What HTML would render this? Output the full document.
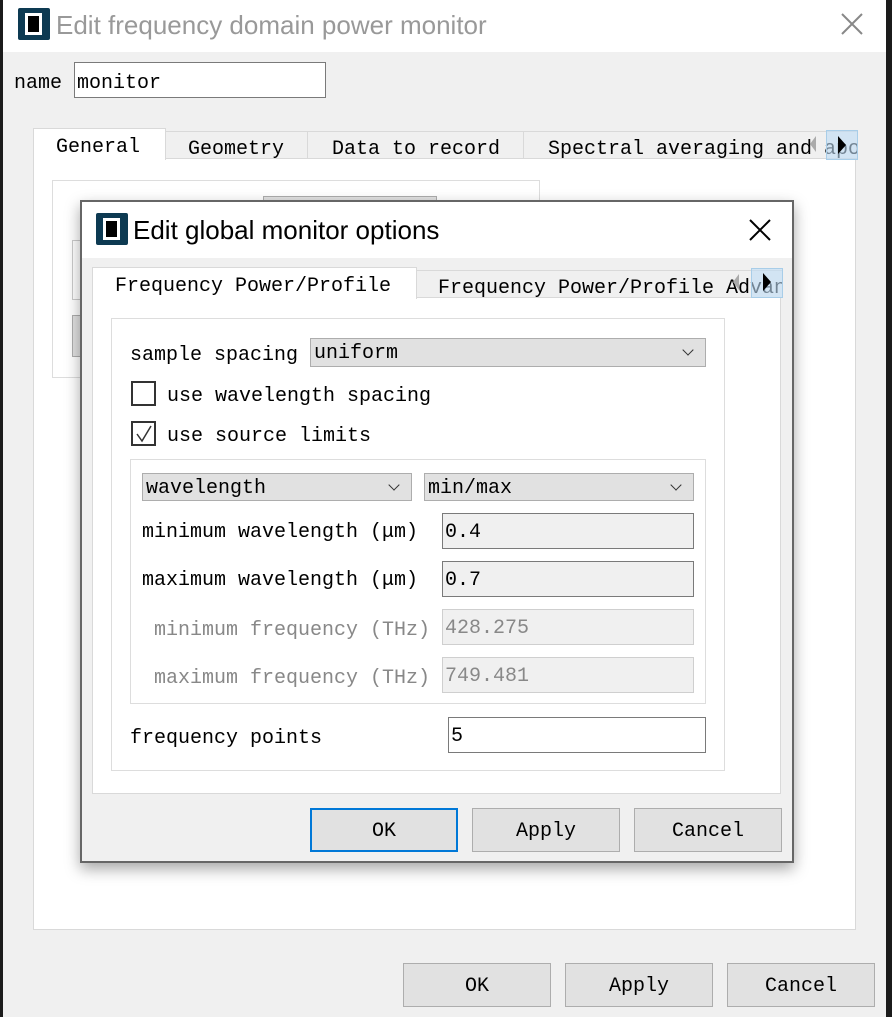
<!DOCTYPE html>
<html><head><meta charset="utf-8"><style>
*{box-sizing:border-box;margin:0;padding:0}
body{width:892px;height:1017px;background:#1b1b1b;position:relative;overflow:hidden;font-family:"Liberation Mono","Noto Sans CJK SC",monospace;font-size:20px;color:#000}
.a{position:absolute}
.t{position:absolute;white-space:nowrap;line-height:24px;padding-top:2px}
.box{position:absolute;border:1px solid #7a7a7a;background:#fff}
.btn{position:absolute;background:#e1e1e1;border:1px solid #adadad;text-align:center;line-height:45px;font-size:20px}
.combo{position:absolute;background:#e1e1e1;border:1px solid #adadad;line-height:30px;padding-left:3px}
.combo:after{content:"";position:absolute;right:13px;top:7px;width:7px;height:7px;border-right:1.3px solid #333;border-bottom:1.3px solid #333;transform:rotate(45deg)}
.inp{position:absolute;background:#f0f0f0;border:1px solid #7a7a7a;line-height:37px;padding-left:2px}
.dis{border-color:#cfcfcf;color:#888}
.cb{position:absolute;width:25px;height:25px;border:2px solid #333;background:#fff}
.icon{position:absolute;background:#0d3a52;border-radius:2px}
.icon:after{content:"";position:absolute;left:7px;top:5px;right:8px;bottom:5px;border:3px solid #fff;background:#000}
.arrowbox{position:absolute;background:rgba(190,220,245,0.6);border:1px solid #a8cde8}
</style></head><body>
<div class="a" style="left:3px;top:0;width:883px;height:1017px;background:#f0f0f0"></div>
<div class="a" style="left:3px;top:0;width:883px;height:52px;background:#fff"></div>
<div class="icon" style="left:18px;top:8px;width:32px;height:32px"></div>
<div class="t" style="left:56px;top:8px;font-family:'Liberation Sans',sans-serif;font-size:26px;line-height:30px;color:#999;letter-spacing:0">Edit frequency domain power monitor</div>
<svg class="a" style="left:840px;top:12px" width="24" height="24"><path d="M2 2L22 22M22 2L2 22" stroke="#888" stroke-width="2"/></svg>
<div class="t" style="left:14px;top:70px">name</div>
<div class="box" style="left:74px;top:62px;width:252px;height:36px"></div>
<div class="t" style="left:77px;top:70px">monitor</div>
<div class="a" style="left:33px;top:158px;width:823px;height:772px;background:#fff;border:1px solid #d9d9d9"></div>
<div class="a" style="left:165px;top:131px;width:693px;height:28px;background:#f0f0f0;border:1px solid #d9d9d9"></div>
<div class="a" style="left:307px;top:131px;width:1px;height:28px;background:#d9d9d9"></div>
<div class="a" style="left:523px;top:131px;width:1px;height:28px;background:#d9d9d9"></div>
<div class="a" style="left:33px;top:128px;width:133px;height:32px;background:#fff;border:1px solid #d9d9d9;border-bottom:none"></div>
<div class="t" style="left:56px;top:134px">General</div>
<div class="t" style="left:188px;top:136px">Geometry</div>
<div class="t" style="left:332px;top:136px">Data to record</div>
<div class="t" style="left:548px;top:136px;width:310px;overflow:hidden">Spectral averaging and apo</div>
<div class="arrowbox" style="left:826px;top:130px;width:32px;height:30px"></div>
<div class="a" style="left:810px;top:136px;width:0;height:0;border-top:8px solid transparent;border-bottom:8px solid transparent;border-right:6px solid #aaa"></div>
<div class="a" style="left:838px;top:136px;width:0;height:0;border-top:9px solid transparent;border-bottom:9px solid transparent;border-left:8px solid #000"></div>
<div class="a" style="left:52px;top:180px;width:488px;height:198px;border:1px solid #ddd;background:#fff"></div>
<div class="a" style="left:263px;top:196px;width:174px;height:8px;background:#e1e1e1;border:1px solid #adadad"></div>
<div class="a" style="left:72px;top:240px;width:10px;height:60px;border:1px solid #ccc"></div>
<div class="a" style="left:72px;top:315px;width:10px;height:42px;background:#e1e1e1;border:1px solid #adadad"></div>
<div class="btn" style="left:403px;top:963px;width:148px;height:44px">OK</div>
<div class="btn" style="left:565px;top:963px;width:148px;height:44px">Apply</div>
<div class="btn" style="left:727px;top:963px;width:148px;height:44px">Cancel</div>
<div class="a" style="left:80px;top:200px;width:714px;height:663px;background:#f0f0f0;border:2px solid #666;box-shadow:0 6px 14px rgba(0,0,0,0.35)"></div>
<div class="a" style="left:82px;top:202px;width:710px;height:56px;background:#fff"></div>
<div class="icon" style="left:96px;top:213px;width:32px;height:32px"></div>
<div class="t" style="left:133px;top:213px;font-family:'Liberation Sans',sans-serif;font-size:26px;line-height:30px">Edit global monitor options</div>
<svg class="a" style="left:749px;top:219px" width="22" height="22"><path d="M1 1L21 21M21 1L1 21" stroke="#000" stroke-width="2"/></svg>
<div class="a" style="left:92px;top:297px;width:689px;height:497px;background:#fff;border:1px solid #d9d9d9"></div>
<div class="a" style="left:416px;top:270px;width:367px;height:28px;background:#f0f0f0;border:1px solid #d9d9d9"></div>
<div class="a" style="left:92px;top:267px;width:325px;height:32px;background:#fff;border:1px solid #d9d9d9;border-bottom:none"></div>
<div class="t" style="left:115px;top:273px">Frequency Power/Profile</div>
<div class="t" style="left:438px;top:275px;width:345px;overflow:hidden">Frequency Power/Profile Advanced</div>
<div class="arrowbox" style="left:751px;top:268px;width:32px;height:30px"></div>
<div class="a" style="left:733px;top:274px;width:0;height:0;border-top:8px solid transparent;border-bottom:8px solid transparent;border-right:6px solid #aaa"></div>
<div class="a" style="left:763px;top:273px;width:0;height:0;border-top:9px solid transparent;border-bottom:9px solid transparent;border-left:8px solid #000"></div>
<div class="a" style="left:111px;top:318px;width:614px;height:453px;border:1px solid #ddd"></div>
<div class="t" style="left:130px;top:342px">sample spacing</div>
<div class="combo" style="left:310px;top:338px;width:396px;height:29px">uniform</div>
<div class="cb" style="left:131px;top:381px"></div>
<div class="t" style="left:167px;top:383px">use wavelength spacing</div>
<div class="cb" style="left:131px;top:421px"></div>
<svg class="a" style="left:135px;top:425px" width="18" height="18"><path d="M2 9L7 16L16 1" stroke="#333" stroke-width="1.5" fill="none"/></svg>
<div class="t" style="left:167px;top:423px">use source limits</div>
<div class="a" style="left:130px;top:459px;width:576px;height:245px;border:1px solid #ddd"></div>
<div class="combo" style="left:142px;top:473px;width:270px;height:28px">wavelength</div>
<div class="combo" style="left:424px;top:473px;width:270px;height:28px">min/max</div>
<div class="t" style="left:142px;top:519px">minimum wavelength (μm)</div>
<div class="inp" style="left:442px;top:513px;width:252px;height:36px">0.4</div>
<div class="t" style="left:142px;top:567px">maximum wavelength (μm)</div>
<div class="inp" style="left:442px;top:561px;width:252px;height:36px">0.7</div>
<div class="t" style="left:154px;top:617px;color:#888">minimum frequency (THz)</div>
<div class="inp dis" style="left:442px;top:609px;width:252px;height:36px">428.275</div>
<div class="t" style="left:154px;top:665px;color:#888">maximum frequency (THz)</div>
<div class="inp dis" style="left:442px;top:657px;width:252px;height:36px">749.481</div>
<div class="t" style="left:130px;top:725px">frequency points</div>
<div class="inp" style="left:448px;top:717px;width:258px;height:36px;background:#fff">5</div>
<div class="btn" style="left:310px;top:808px;width:148px;height:44px;border:2px solid #0078d7;line-height:43px">OK</div>
<div class="btn" style="left:472px;top:808px;width:148px;height:44px">Apply</div>
<div class="btn" style="left:634px;top:808px;width:148px;height:44px">Cancel</div>
</body></html>
